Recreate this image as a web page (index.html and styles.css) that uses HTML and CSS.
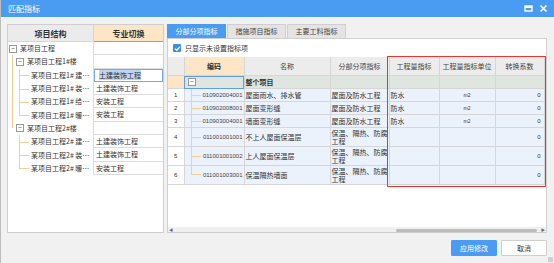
FILE: index.html
```html
<!DOCTYPE html>
<html>
<head>
    <meta charset="UTF-8">
    <title>匹配指标</title>
    <link rel="stylesheet" href="styles.css">
</head>
<body>
    <div class="dialog">
        <div class="titlebar">
            <span class="title">匹配指标</span>
            <span class="win-btns">
                <svg width="9" height="9" viewBox="0 0 9 9"><rect x="1" y="2" width="7" height="5" fill="none" stroke="#fff" stroke-width="1.4"/><rect x="1" y="2" width="7" height="2" fill="#fff"/></svg>
                <svg width="9" height="9" viewBox="0 0 9 9"><path d="M1.5 1.5 L7.5 7.5 M7.5 1.5 L1.5 7.5" stroke="#fff" stroke-width="1.6"/></svg>
            </span>
        </div>
        <div class="main">
            <!-- left tree -->
            <div class="left-panel">
                <div class="tree-head">
                    <div class="th th-name">项目结构</div>
                    <div class="th th-major">专业切换</div>
                </div>
                <div class="tree-row">
                    <div class="tree-name lv1"><span class="box">−</span>某项目工程</div>
                    <div class="tree-major"></div>
                </div>
                <div class="tree-row">
                    <div class="tree-name lv2"><span class="vline v1"></span><span class="box">−</span>某项目工程1#楼</div>
                    <div class="tree-major"></div>
                </div>
                <div class="tree-row">
                    <div class="tree-name lv3"><span class="vline v1"></span><span class="vline v2"></span><span class="hline"></span><span class="txt">某项目工程1# 建…</span></div>
                    <div class="tree-major editing"><span class="sel">土建装饰工程</span></div>
                </div>
                <div class="tree-row">
                    <div class="tree-name lv3"><span class="vline v1"></span><span class="vline v2"></span><span class="hline"></span><span class="txt">某项目工程1# 装…</span></div>
                    <div class="tree-major">土建装饰工程</div>
                </div>
                <div class="tree-row">
                    <div class="tree-name lv3"><span class="vline v1"></span><span class="vline v2"></span><span class="hline"></span><span class="txt">某项目工程1# 给…</span></div>
                    <div class="tree-major">安装工程</div>
                </div>
                <div class="tree-row">
                    <div class="tree-name lv3"><span class="vline v1"></span><span class="vline v2 half"></span><span class="hline"></span><span class="txt">某项目工程1# 暖…</span></div>
                    <div class="tree-major">安装工程</div>
                </div>
                <div class="tree-row">
                    <div class="tree-name lv2"><span class="vline v1 half"></span><span class="box">−</span>某项目工程2#楼</div>
                    <div class="tree-major"></div>
                </div>
                <div class="tree-row">
                    <div class="tree-name lv3"><span class="vline v2"></span><span class="hline"></span><span class="txt">某项目工程2# 建…</span></div>
                    <div class="tree-major">土建装饰工程</div>
                </div>
                <div class="tree-row">
                    <div class="tree-name lv3"><span class="vline v2"></span><span class="hline"></span><span class="txt">某项目工程2# 装…</span></div>
                    <div class="tree-major">土建装饰工程</div>
                </div>
                <div class="tree-row">
                    <div class="tree-name lv3"><span class="vline v2 half"></span><span class="hline"></span><span class="txt">某项目工程2# 暖…</span></div>
                    <div class="tree-major">安装工程</div>
                </div>
            </div>

            <!-- right tabs + grid -->
            <div class="right-panel">
                <div class="tabs">
                    <div class="tab active">分部分项指标</div>
                    <div class="tab">措施项目指标</div>
                    <div class="tab">主要工料指标</div>
                </div>
                <div class="tab-body">
                    <label class="only-unset">
                        <span class="check">
                            <svg width="7" height="7" viewBox="0 0 7 7"><path d="M1 3.6 L2.8 5.3 L6 1.6" fill="none" stroke="#fff" stroke-width="1.3"/></svg>
                        </span>
                        只显示未设置指标项
                    </label>
                    <div class="grid-wrap">
                        <table class="grid">
                            <colgroup>
                                <col style="width:16px">
                                <col style="width:60px">
                                <col style="width:86px">
                                <col style="width:59px">
                                <col style="width:50px">
                                <col style="width:56px">
                                <col style="width:49px">
                            </colgroup>
                            <thead>
                                <tr>
                                    <th></th>
                                    <th class="th-code">编码</th>
                                    <th>名称</th>
                                    <th>分部分项指标</th>
                                    <th>工程量指标</th>
                                    <th>工程量指标单位</th>
                                    <th>转换系数</th>
                                </tr>
                            </thead>
                            <tbody>
                                <tr class="group">
                                    <td class="num cur"></td>
                                    <td class="code focus"><span class="box">−</span></td>
                                    <td class="bold">整个项目</td>
                                    <td></td><td></td><td></td><td></td>
                                </tr>
                                <tr>
                                    <td class="num">1</td>
                                    <td class="code"><span class="branch"></span>010902004001</td>
                                    <td>屋面雨水、排水管</td>
                                    <td>屋面及防水工程</td>
                                    <td>防水</td>
                                    <td class="unit">m2</td>
                                    <td class="ratio">0</td>
                                </tr>
                                <tr>
                                    <td class="num">2</td>
                                    <td class="code"><span class="branch"></span>010902008001</td>
                                    <td>屋面变形缝</td>
                                    <td>屋面及防水工程</td>
                                    <td>防水</td>
                                    <td class="unit">m2</td>
                                    <td class="ratio">0</td>
                                </tr>
                                <tr>
                                    <td class="num">3</td>
                                    <td class="code"><span class="branch"></span>010903004001</td>
                                    <td>墙面变形缝</td>
                                    <td>屋面及防水工程</td>
                                    <td>防水</td>
                                    <td class="unit">m2</td>
                                    <td class="ratio">0</td>
                                </tr>
                                <tr class="tall">
                                    <td class="num">4</td>
                                    <td class="code"><span class="branch"></span>011001001001</td>
                                    <td>不上人屋面保温层</td>
                                    <td class="wrap">保温、隔热、防腐工程</td>
                                    <td></td>
                                    <td></td>
                                    <td class="ratio">0</td>
                                </tr>
                                <tr class="tall">
                                    <td class="num">5</td>
                                    <td class="code"><span class="branch"></span>011001001002</td>
                                    <td>上人屋面保温层</td>
                                    <td class="wrap">保温、隔热、防腐工程</td>
                                    <td></td>
                                    <td></td>
                                    <td class="ratio">0</td>
                                </tr>
                                <tr class="tall">
                                    <td class="num">6</td>
                                    <td class="code"><span class="branch last"></span>011001003001</td>
                                    <td>保温隔热墙面</td>
                                    <td class="wrap">保温、隔热、防腐工程</td>
                                    <td></td>
                                    <td></td>
                                    <td class="ratio">0</td>
                                </tr>
                            </tbody>
                        </table>
                        <div class="mark-box"></div>
                    </div>
                    <div class="hscroll">
                        <span class="arrow">&#9664;</span>
                        <div class="track"><div class="thumb"></div></div>
                        <span class="arrow">&#9654;</span>
                    </div>
                </div>
            </div>
        </div>
        <div class="footer">
            <button class="btn btn-apply">应用修改</button>
            <button class="btn btn-cancel">取消</button>
            <span class="grip"></span>
        </div>
    </div>
</body>
</html>
```

FILE: styles.css
```css
body {
    margin: 0;
    font-family: "Noto Sans CJK SC", "Noto Sans", sans-serif;
    font-size: 7px;
    color: #333;
}
.dialog {
    width: 554px;
    height: 263px;
    background-color: #f1f1f1;
    display: flex;
    flex-direction: column;
    position: relative;
    box-sizing: border-box;
    border-left: 1px solid #bdbdbd;
}
.titlebar {
    height: 17px;
    flex: none;
    background-color: #4a9cf2;
    color: #fff;
    display: flex;
    align-items: center;
    justify-content: space-between;
    padding: 0 6px 0 7px;
    font-size: 8px;
}
.win-btns {
    display: flex;
    gap: 6px;
}
.win-btns svg {
    display: block;
}
.main {
    display: flex;
    gap: 3px;
    padding: 7px 6px 0 6px;
    height: 209px;
}

/* left tree */
.left-panel {
    width: 157px;
    border: 1px solid #cfcfcf;
    background-color: #fff;
    box-sizing: border-box;
}
.tree-head {
    display: flex;
    height: 17px;
}
.th {
    display: flex;
    align-items: center;
    justify-content: center;
    font-weight: bold;
    font-size: 8px;
    box-sizing: border-box;
    color: #333;
}
.th-name {
    width: 86px;
    background-color: #ebebeb;
    border-right: 1px solid #d6d6d6;
    border-bottom: 1px solid #d6d6d6;
}
.th-major {
    flex: 1;
    background-color: #fde5c6;
    border-bottom: 1px solid #6fa8ee;
}
.tree-row {
    display: flex;
    height: 13.3px;
    line-height: 13px;
}
.tree-name {
    width: 86px;
    box-sizing: border-box;
    border-right: 1px solid #dcdcdc;
    position: relative;
    white-space: nowrap;
    display: flex;
    align-items: center;
}
.tree-major {
    flex: 1;
    border-bottom: 1px solid #dcdcdc;
    padding-left: 2px;
    box-sizing: border-box;
}
.tree-major.editing {
    border: 1px solid #74aaea;
    padding-left: 4px;
    line-height: 11px;
}
.sel {
    background-color: #bcd5f5;
}
.box {
    display: inline-block;
    width: 6px;
    height: 6px;
    border: 1px solid #999;
    background-color: #fff;
    font-size: 7px;
    line-height: 5px;
    text-align: center;
    color: #555;
    margin-right: 3px;
    flex: none;
    position: relative;
}
.lv1 {
    padding-left: 1px;
}
.lv2 {
    padding-left: 8px;
}
.lv3 {
    padding-left: 23px;
}
.vline {
    position: absolute;
    top: 0;
    bottom: 0;
    border-left: 1px solid #f6cf98;
}
.vline.half {
    bottom: 50%;
}
.v1 {
    left: 4px;
}
.v2 {
    left: 11px;
}
.hline {
    position: absolute;
    left: 11px;
    width: 10px;
    top: 50%;
    border-top: 1px solid #f6cf98;
}

/* right tabs */
.right-panel {
    flex: 1;
    display: flex;
    flex-direction: column;
}
.tabs {
    display: flex;
    height: 14px;
    gap: 1px;
}
.tab {
    width: 59px;
    background-color: #e4e4e4;
    border: 1px solid #cfcfcf;
    border-bottom: none;
    box-sizing: border-box;
    text-align: center;
    line-height: 13px;
    color: #444;
}
.tab.active {
    background-color: #4a9cf2;
    border-color: #4a9cf2;
    color: #fff;
}
.tab-body {
    flex: 1;
    border: 1px solid #cfcfcf;
    background-color: #fff;
    display: flex;
    flex-direction: column;
    margin-right: 1px;
}
.only-unset {
    display: flex;
    align-items: center;
    height: 18px;
    padding-left: 5px;
    gap: 4px;
}
.check {
    width: 8px;
    height: 8px;
    background-color: #3b8ee8;
    border-radius: 1px;
    display: flex;
    align-items: center;
    justify-content: center;
}
.grid-wrap {
    flex: 1;
    position: relative;
}
.grid {
    table-layout: fixed;
    border-collapse: collapse;
    width: 376px;
}
.grid th {
    height: 18px;
    background-color: #ececec;
    border: 1px solid #d6d6d6;
    border-top: none;
    font-weight: normal;
    color: #444;
    padding: 0;
    white-space: nowrap;
}
.grid th:first-child {
    border-left: none;
}
.grid th.th-code {
    background-color: #fde5c6;
    font-weight: bold;
    color: #333;
}
.grid td {
    height: 12px;
    border: 1px solid #d6d6d6;
    background-color: #ecf2fb;
    padding: 0 1px;
    white-space: nowrap;
    overflow: hidden;
    line-height: 12px;
}
.grid td:first-child {
    border-left: none;
}
.grid tr.tall td {
    height: 18px;
}
.grid td.num {
    background-color: #fff;
    text-align: center;
    font-family: "Liberation Sans", sans-serif;
    font-size: 6px;
}
.grid td.num.cur {
    background-color: #fde5c6;
}
.grid tr.group td {
    background-color: #dfe5df;
}
.grid tr.group td.num {
    background-color: #fde5c6;
}
.grid td.focus {
    outline: 1px solid #5d9de9;
    outline-offset: -1px;
}
.grid td.code {
    position: relative;
    text-align: right;
    font-family: "Liberation Sans", sans-serif;
    font-size: 6px;
    color: #444;
}
.grid td.code .box {
    position: absolute;
    left: 3px;
    top: 2px;
}
.branch {
    position: absolute;
    left: 6px;
    top: -1px;
    bottom: -1px;
    width: 9px;
    border-left: 1px solid #f6cf98;
}
.branch::after {
    content: "";
    position: absolute;
    left: 0;
    right: 0;
    top: 50%;
    border-top: 1px solid #f6cf98;
}
.branch.last {
    bottom: 50%;
}
.branch.last::after {
    top: auto;
    bottom: 0;
}
.grid td.bold {
    font-weight: bold;
}
.grid td.wrap {
    white-space: normal;
    line-height: 8px;
}
.grid td.unit {
    text-align: center;
    font-family: "Liberation Sans", sans-serif;
    font-size: 5px;
}
.grid td.ratio {
    text-align: right;
    padding-right: 3px;
    font-family: "Liberation Sans", sans-serif;
    font-size: 6px;
}
.mark-box {
    position: absolute;
    left: 219px;
    top: -1px;
    right: 0;
    height: 129px;
    border: 1px solid #ee3333;
}
.hscroll {
    height: 5px;
    display: flex;
    align-items: center;
    background-color: #f0f0f0;
}
.hscroll .arrow {
    font-size: 4px;
    color: #666;
    width: 6px;
    text-align: center;
}
.track {
    flex: 1;
    height: 4px;
    position: relative;
}
.thumb {
    position: absolute;
    left: 222px;
    right: 3px;
    top: 1px;
    height: 3px;
    background-color: #bcbcbc;
    border-radius: 2px;
}

/* footer */
.footer {
    flex: 1;
    display: flex;
    justify-content: flex-end;
    align-items: center;
    gap: 4px;
    padding-right: 7px;
    position: relative;
}
.btn {
    width: 46px;
    height: 16px;
    font-family: "Noto Sans CJK SC", sans-serif;
    font-size: 7px;
    border-radius: 1px;
    padding: 0;
    cursor: pointer;
}
.btn-apply {
    background-color: #4a9cf2;
    border: 1px solid #4a9cf2;
    color: #fff;
}
.btn-cancel {
    background-color: #fff;
    border: 1px solid #cfcfcf;
    color: #333;
}
.grip {
    position: absolute;
    right: 1px;
    bottom: 1px;
    width: 5px;
    height: 5px;
    background-image: radial-gradient(#aaa 0.6px, transparent 0.8px);
    background-size: 2px 2px;
}
```
